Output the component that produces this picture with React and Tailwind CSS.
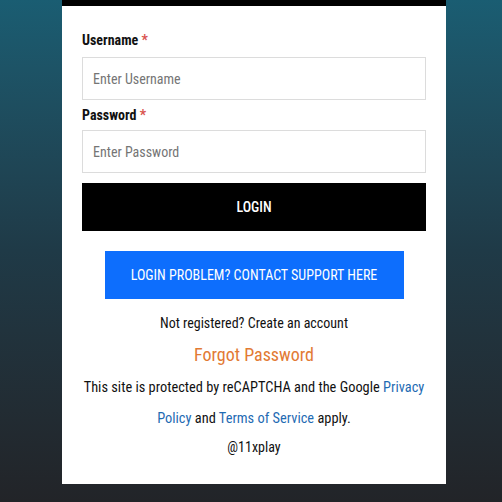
import React from 'react';

const font = { fontFamily: '"Roboto Condensed", "Liberation Sans Narrow", "DejaVu Sans Condensed", Roboto, sans-serif' };

export default function App() {
  return (
    <div
      className="min-h-[502px] w-full bg-gradient-to-b from-[#1a5d72] via-[#1f3a47] to-[#222428] flex pl-[62px]"
      style={font}
    >
      <div className="w-[384px] h-[484px] bg-white border-t-[6px] border-black px-5 pt-[24px] flex flex-col">
        <label className="text-[14px] font-bold text-[#111] leading-[20px]">
          Username <span className="text-[#d9534f]">*</span>
        </label>
        <input
          className="mt-[7px] h-[43px] w-full border border-[#dcdcdc] px-[10px] text-[14px] placeholder:text-[#757575] outline-none"
          placeholder="Enter Username"
        />
        <label className="mt-[5px] text-[14px] font-bold text-[#111] leading-[20px]">
          Password <span className="text-[#d9534f]">*</span>
        </label>
        <input
          type="password"
          className="mt-[5px] h-[43px] w-full border border-[#dcdcdc] px-[10px] text-[14px] placeholder:text-[#757575] outline-none"
          placeholder="Enter Password"
        />
        <button className="mt-[10px] h-[48px] w-full bg-black text-white text-[14px] font-medium">
          LOGIN
        </button>
        <button className="mt-[20px] mx-auto h-[48px] w-[299px] bg-[#0d6efd] text-white text-[14px] font-normal">
          LOGIN PROBLEM? CONTACT SUPPORT HERE
        </button>
        <p className="mt-[14px] text-center text-[14px] text-[#111] leading-[20px]">
          Not registered? Create an account
        </p>
        <p className="mt-[10px] text-center text-[18px] text-[#e27a34] leading-[24px]">
          Forgot Password
        </p>
        <p className="mt-[5px] text-center text-[14.4px] text-[#111] leading-[31px]">
          This site is protected by reCAPTCHA and the Google{' '}
          <a className="text-[#1f6bb3]">Privacy Policy</a> and{' '}
          <a className="text-[#1f6bb3]">Terms of Service</a> apply.
        </p>
        <p className="mt-[-2px] text-center text-[14px] text-[#111] leading-[30px]">@11xplay</p>
      </div>
    </div>
  );
}
